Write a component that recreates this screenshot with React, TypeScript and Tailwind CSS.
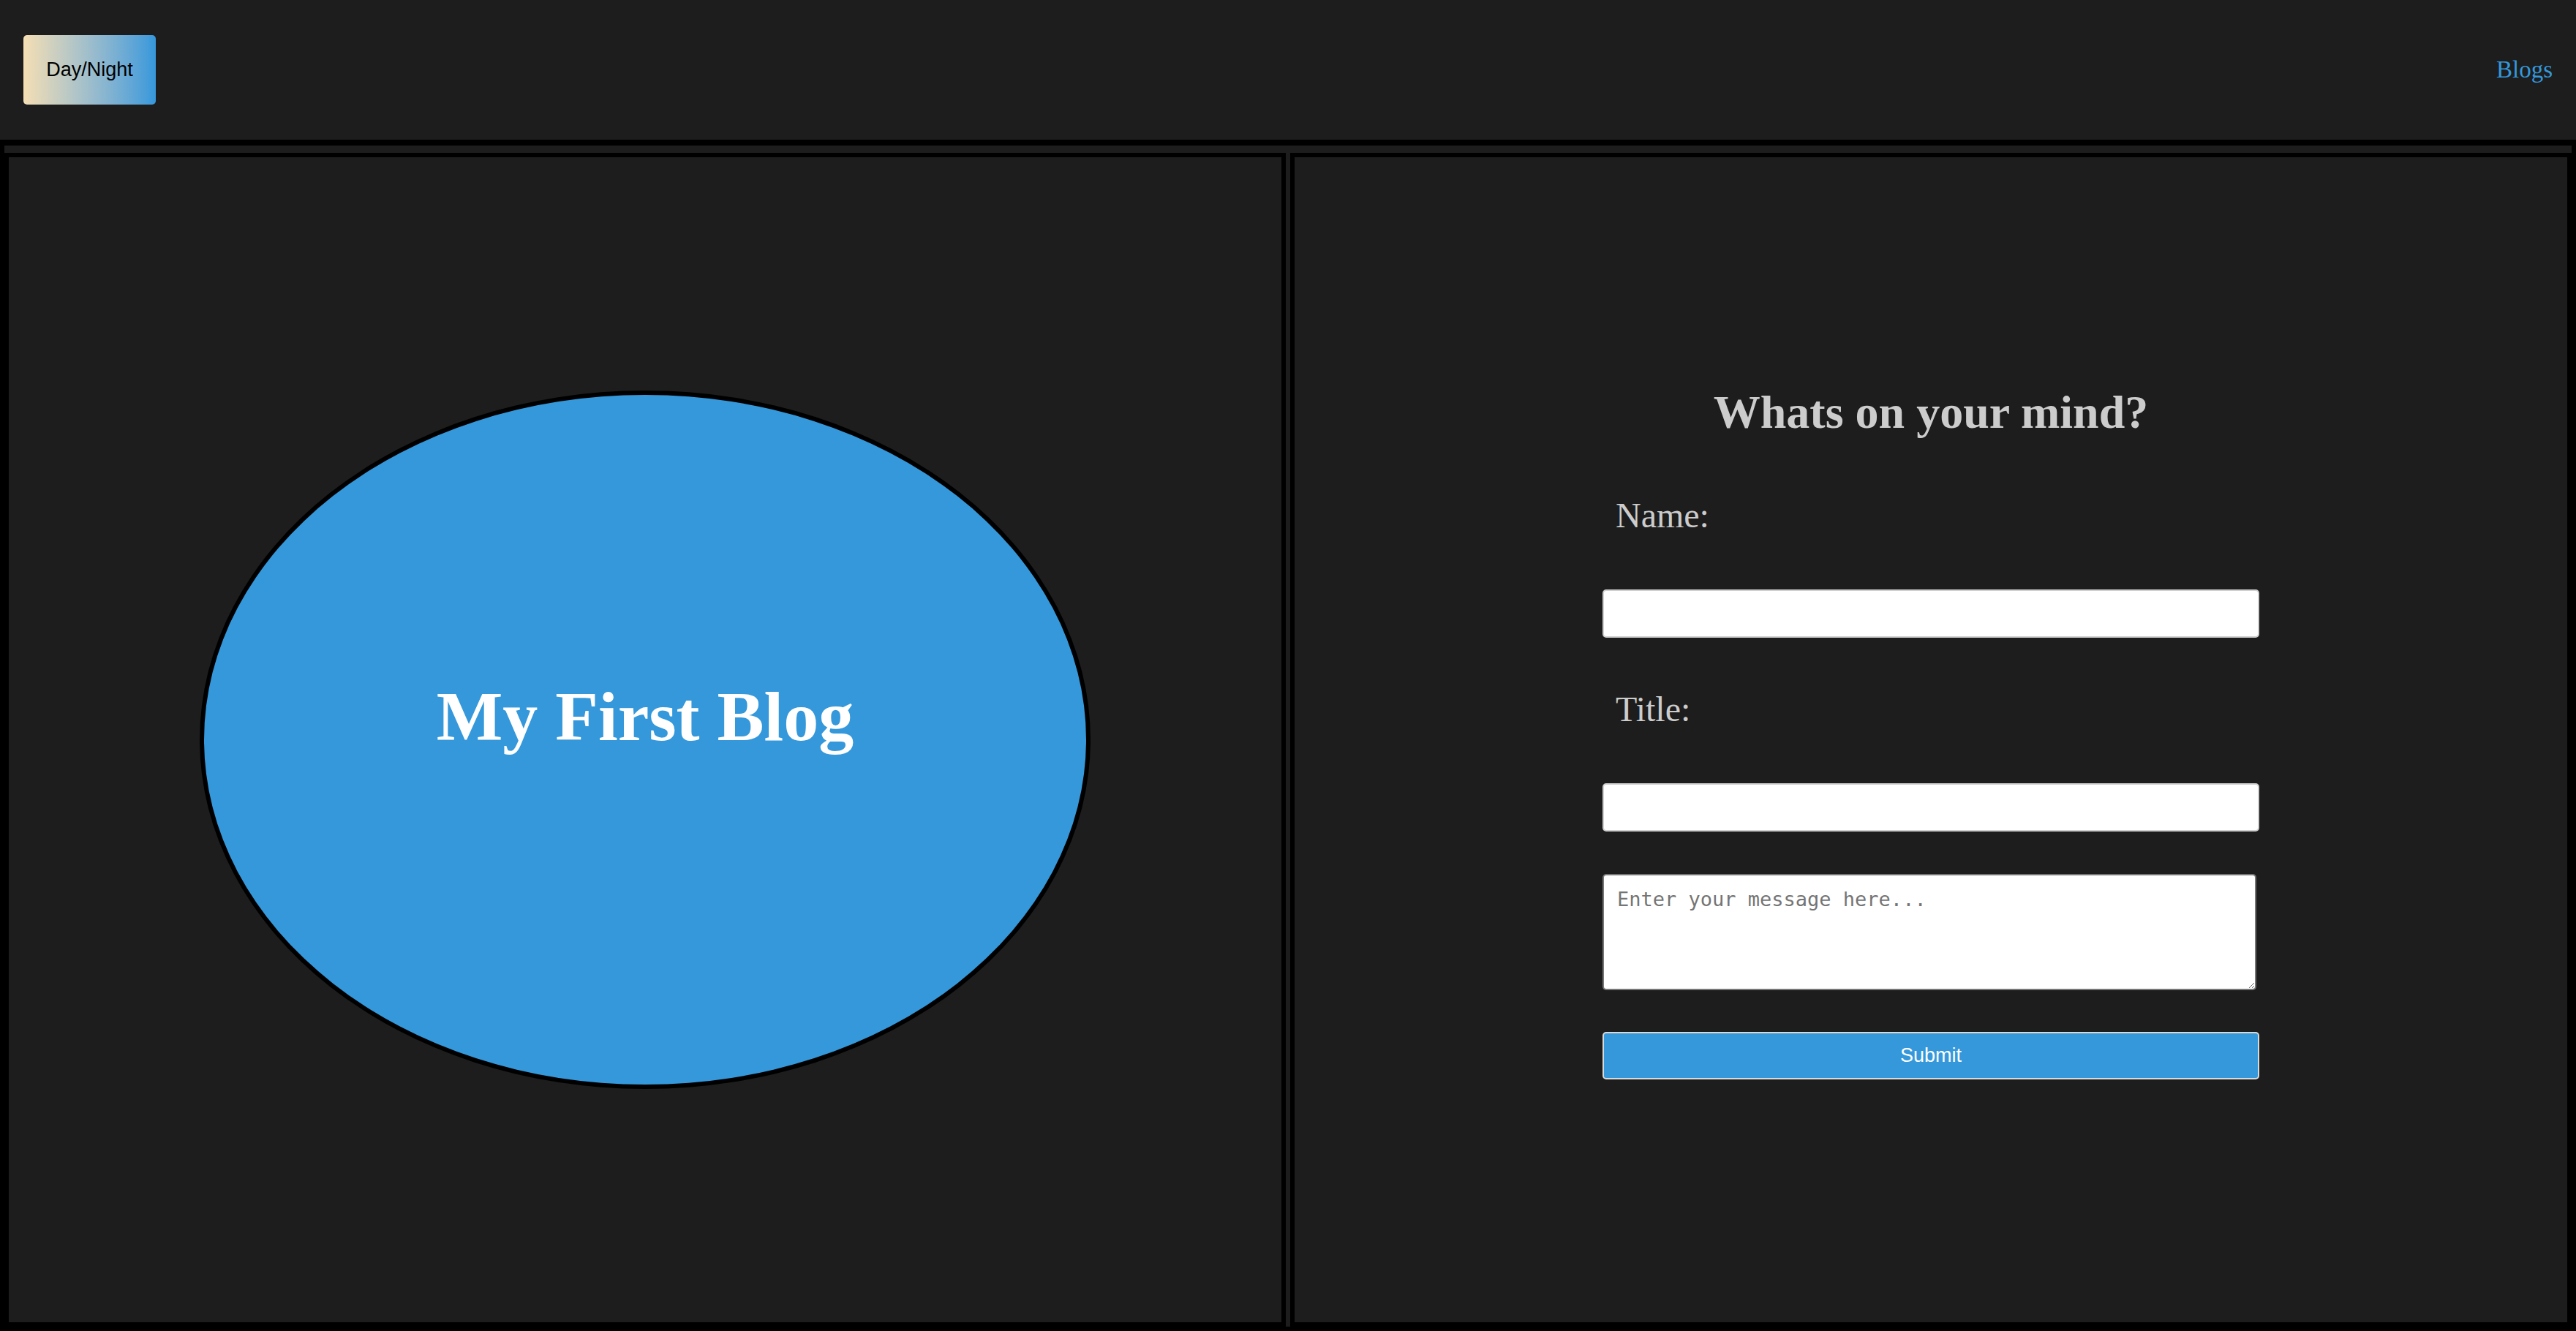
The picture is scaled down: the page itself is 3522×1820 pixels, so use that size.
export default function App() {
  return (
    <div className="min-h-screen bg-[#1d1d1d] font-['Liberation_Serif',serif]">
      <header className="flex h-[191px] items-center justify-between px-[32px]">
        <button
          type="button"
          className="h-[95px] w-[181px] rounded-[5px] bg-linear-to-r from-[#f5deb3] to-[#3498db] font-['Liberation_Sans',Arial,sans-serif] text-[27px] text-black"
        >
          Day/Night
        </button>
        <a href="#" className="text-[33px] text-[#3498db]">
          Blogs
        </a>
      </header>

      <main className="flex h-[1629px] gap-[6px] border-x-[6px] border-t-[8px] border-b-[6px] border-black pt-[10px]">
        {/* left: title bubble */}
        <section className="flex flex-1 items-center justify-center border-[6px] border-black">
          <div className="flex h-[60%] w-[70%] items-center justify-center rounded-[50%] border-[6px] border-black bg-[#3498db] pb-[63px]">
            <h1 className="text-[96px] leading-[110px] font-bold text-white">My First Blog</h1>
          </div>
        </section>

        {/* right: post form */}
        <section className="flex flex-1 items-center justify-center border-[6px] border-black pb-[20px]">
          <form className="flex w-[898px] flex-col" onSubmit={e => e.preventDefault()}>
            <h2 className="text-center text-[64px] leading-[74px] font-bold text-[#cccccc]">Whats on your mind?</h2>

            <label htmlFor="name" className="mt-[76px] pl-[18px] text-[48px] leading-[56px] text-[#cccccc]">
              Name:
            </label>
            <input
              id="name"
              type="text"
              className="mt-[73px] h-[66px] w-full rounded-[5px] border-2 border-[#d0d0d0] bg-white px-[10px] text-[27px]"
            />

            <label htmlFor="title" className="mt-[70px] pl-[18px] text-[48px] leading-[56px] text-[#cccccc]">
              Title:
            </label>
            <input
              id="title"
              type="text"
              className="mt-[73px] h-[66px] w-full rounded-[5px] border-2 border-[#d0d0d0] bg-white px-[10px] text-[27px]"
            />

            <textarea
              placeholder="Enter your message here..."
              className="mt-[58px] h-[159px] w-[894px] rounded-[5px] border-2 border-[#767676] bg-white px-[18px] pt-[13px] pb-[16px] font-['DejaVu_Sans_Mono',monospace] text-[27px] placeholder:text-[#757575]"
            />

            <button
              type="submit"
              className="mt-[57px] h-[65px] w-full rounded-[5px] border-2 border-[#d9d9d9] bg-[#3498db] font-['Liberation_Sans',Arial,sans-serif] text-[27px] text-white"
            >
              Submit
            </button>
          </form>
        </section>
      </main>
    </div>
  );
}
